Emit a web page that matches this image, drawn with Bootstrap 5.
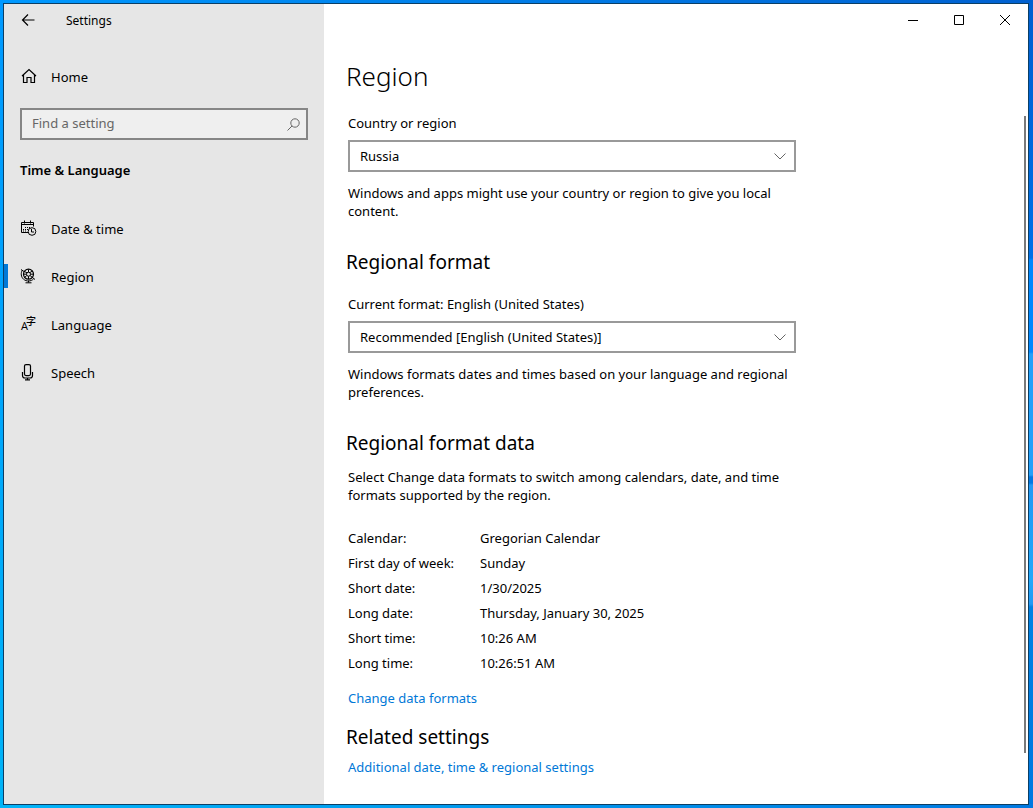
<!DOCTYPE html>
<html lang="en">
<head>
<meta charset="utf-8">
<meta name="viewport" content="width=device-width, initial-scale=1">
<title>Settings</title>
<link href="https://cdn.jsdelivr.net/npm/bootstrap@5.3.0/dist/css/bootstrap.min.css" rel="stylesheet">
<style>
  :root { --accent: #0078d7; }
  body {
    font-family: "Noto Sans", "Open Sans", sans-serif;
    font-size: 13px; line-height: 18px; color: #000;
    padding: 3px 4px 3px 3px;
    background:
      linear-gradient(#005fd0, #0070e8 258px, #0088ff 260px, #0088ff 352px, #22a0fa 354px, #22a0fa 475px, #0078e4 477px, #0078e4 483px, #2299f5 485px, #20a8fa 580px, #2299f5 604px, #0082e4 607px, #0078e0) right / 4px 100% no-repeat,
      linear-gradient(#0099ff, #00b4f8) left / 3px 100% no-repeat,
      linear-gradient(90deg, #0099ff, #0060d0) top / 100% 3px no-repeat,
      linear-gradient(90deg, #00b4f8, #0078e0) bottom / 100% 3px no-repeat;
  }
  .app-window { min-height: calc(100vh - 6px); border: 1px solid #0b3f66; background: #fff; }
  .sidebar { width: 320px; background: #e6e6e6; }
  .title-row { height: 32px; }
  .title-text { font-size: 12px; padding: 2px 0 0 14px; }
  .icon-btn { width: 48px; height: 32px; padding: 0; border: 0; border-radius: 0; line-height: 0; color: #000; }
  .caption-btn { width: 46px; }
  .side-link { height: 48px; padding: 0 0 0 16px; gap: 14px; color: #000; border-radius: 0; }
  .side-link:hover { color: #000; background: #dadada; }
  .side-link svg { width: 17px; height: 17px; flex: none; overflow: visible; }
  .side-link.active { background: linear-gradient(var(--accent), var(--accent)) left center / 4px 24px no-repeat; }
  .side-link span { padding-top: 2px; }
  .home-link { margin-top: 16px; }
  .search-box { margin: 8px 16px 0; height: 32px; border: 2px solid #868686; background: #efefef; }
  .search-box input { padding: 0 10px; border: 0; background: transparent; font-size: 13px; box-shadow: none !important; }
  .search-box input::placeholder { color: #666; }
  .search-box button { width: 26px; height: 28px; color: #666; }
  .side-title { font-size: 13px; font-weight: 600; margin: 21px 16px 25px; line-height: 18px; }
  .page-body { padding: 20px 24px 28px; }
  .column-main { max-width: 448px; }
  h1 { font-size: 26px; line-height: 40px; font-weight: 300; margin: 0 0 18px; }
  h2 { font-size: 19px; line-height: 28px; font-weight: 400; margin: 28px 0 19px; }
  .column-main h1, .column-main h2 { margin-left: -2px; }
  .column-main h2.tight { margin-bottom: 11px; }
  .column-main h2.related { margin-top: 16px; margin-bottom: 7px; }
  .form-label { margin: 0 0 8px; display: block; }
  .form-select {
    height: 32px; padding: 0 36px 0 10px; border: 2px solid #999; border-radius: 0; color: #000;
    font-size: 13px; line-height: 18px;
    background-image: url("data:image/svg+xml,%3Csvg xmlns='http://www.w3.org/2000/svg' viewBox='0 0 12 12'%3E%3Cpath d='M.5 3.5 6 9l5.500-5.500' fill='none' stroke='%23666'/%3E%3C/svg%3E");
    background-size: 12px 12px; background-position: right 8px center;
  }
  .note { margin: 12px 0 0; }
  .data-table { margin: 21px 0 14px; }
  .data-table th, .data-table td { height: 25px; padding: 0; font-weight: 400; }
  .data-table th { width: 132px; }
  .plain-link { color: var(--accent); text-decoration: none; }
  .scroll-lane { margin: 80px 2px 51px 0; width: 2px; background: #7a7a7a; }
</style>
</head>
<body>
<div class="app-window d-flex">
  <aside class="sidebar flex-shrink-0">
    <header class="title-row d-flex align-items-center">
      <button type="button" class="btn icon-btn" aria-label="Back">
        <svg width="14" height="14" viewBox="0 0 14 14" fill="none" stroke="currentColor" stroke-width="1.2"><path d="M13.500 7H1.500M7 1.500 1.500 7 7 12.500"/></svg>
      </button>
      <span class="title-text">Settings</span>
    </header>
    <a href="#" class="side-link home-link nav-link d-flex align-items-center">
      <svg viewBox="0 0 17 17" fill="none" stroke="currentColor" stroke-width="1.2"><path d="M2 8 9 1.500 16 8M3.500 7v7.500h3.500V9.500h4v5h3.500V7"/></svg>
      <span>Home</span>
    </a>
    <form class="search-box d-flex" role="search" onsubmit="return false">
      <input type="search" class="form-control" placeholder="Find a setting" aria-label="Find a setting">
      <button class="btn icon-btn flex-shrink-0" aria-label="Search">
        <svg width="13" height="13" viewBox="0 0 13 13" fill="none" stroke="currentColor"><circle cx="8" cy="5" r="4.200"/><path d="M5 8 .5 12.500"/></svg>
      </button>
    </form>
    <h2 class="side-title">Time &amp; Language</h2>
    <nav class="nav flex-column" aria-label="Time &amp; Language">
      <a href="#" class="side-link nav-link d-flex align-items-center">
        <svg viewBox="0 0 17 17" fill="none" stroke="currentColor"><path d="M8 12.500H1.500v-10h12v4M1.500 4.500h12M4.500.5v3M10.500.5v3"/><path d="M5 7.500h1m1 0h1m1 0h1M3 9.500h1m1 0h1m1 0h1M3 11h1m1 0h1"/><circle cx="12" cy="11.500" r="3.800"/><path d="M11.500 9v3H14"/></svg>
        <span>Date &amp; time</span>
      </a>
      <a href="#" class="side-link nav-link active d-flex align-items-center" aria-current="page">
        <svg viewBox="0 0 17 17" fill="none" stroke="currentColor"><circle cx="8.500" cy="6.200" r="5" stroke-width="1.200"/><path d="M2.500 2C.5 5 1 9 3.500 11.200c3 2.600 7.500 2.300 10-.2M1 1.500l3 2M12.500 9.500l2.500 2M8.500 12.500v2M5.500 14.800h6"/><circle cx="8.500" cy="6.200" r="2"/><path d="m4.500 3.500 2.500 1.300M10 4.500l2.500-1.500M6.800 7.500 4.500 9.500M10 7.500l2.500 2M8.500 1.500v2.700M3.500 6.200h3M10.500 6.200h3M8.500 8.200V11"/></svg>
        <span>Region</span>
      </a>
      <a href="#" class="side-link nav-link d-flex align-items-center">
        <svg viewBox="0 0 17 17" fill="currentColor" aria-hidden="true"><text x="1" y="14" font-size="11" font-family="Open Sans, sans-serif">A</text><text x="6" y="9" font-size="10" font-family="Noto Sans CJK SC, sans-serif" font-weight="500">字</text></svg>
        <span>Language</span>
      </a>
      <a href="#" class="side-link nav-link d-flex align-items-center">
        <svg viewBox="0 0 17 17" fill="none" stroke="currentColor" stroke-width="1.200"><rect x="4.500" y=".6" width="6" height="11" rx="1.500"/><path d="M2.500 8v3.500c0 1.500 1 2.500 2.500 2.500h5c1.500 0 2.500-1 2.500-2.500V8M7.500 14v2M5 15.800h5"/></svg>
        <span>Speech</span>
      </a>
    </nav>
  </aside>

  <main class="flex-grow-1 d-flex flex-column">
    <div class="title-row d-flex justify-content-end">
      <button type="button" class="btn icon-btn caption-btn" aria-label="Minimize"><svg width="10" height="10" viewBox="0 0 10 10" stroke="currentColor"><path d="M0 5.500h10"/></svg></button>
      <button type="button" class="btn icon-btn caption-btn" aria-label="Maximize"><svg width="10" height="10" viewBox="0 0 10 10" fill="none" stroke="currentColor"><path d="M.5.5h9v9h-9z"/></svg></button>
      <button type="button" class="btn icon-btn caption-btn" aria-label="Close"><svg width="10" height="10" viewBox="0 0 10 10" stroke="currentColor"><path d="m0 0 10 10M10 0 0 10"/></svg></button>
    </div>
    <div class="d-flex flex-grow-1">
      <div class="page-body flex-grow-1">
        <div class="column-main">
          <h1>Region</h1>
          <label class="form-label" for="country">Country or region</label>
          <select class="form-select" id="country"><option>Russia</option></select>
          <p class="note">Windows and apps might use your country or region to give you local content.</p>

          <h2>Regional format</h2>
          <label class="form-label" for="format">Current format: English (United States)</label>
          <select class="form-select" id="format"><option>Recommended [English (United States)]</option></select>
          <p class="note">Windows formats dates and times based on your language and regional preferences.</p>

          <h2 class="tight">Regional format data</h2>
          <p class="mb-0">Select Change data formats to switch among calendars, date, and time formats supported by the region.</p>
          <table class="data-table w-100">
            <tbody>
              <tr><th scope="row">Calendar:</th><td>Gregorian Calendar</td></tr>
              <tr><th scope="row">First day of week:</th><td>Sunday</td></tr>
              <tr><th scope="row">Short date:</th><td>1/30/2025</td></tr>
              <tr><th scope="row">Long date:</th><td>Thursday, January 30, 2025</td></tr>
              <tr><th scope="row">Short time:</th><td>10:26 AM</td></tr>
              <tr><th scope="row">Long time:</th><td>10:26:51 AM</td></tr>
            </tbody>
          </table>
          <a href="#" class="plain-link d-block">Change data formats</a>

          <h2 class="related">Related settings</h2>
          <a href="#" class="plain-link d-block">Additional date, time &amp; regional settings</a>
        </div>
      </div>
      <div class="scroll-lane flex-shrink-0"></div>
    </div>
  </main>
</div>
<script src="https://cdn.jsdelivr.net/npm/bootstrap@5.3.0/dist/js/bootstrap.bundle.min.js"></script>
</body>
</html>
